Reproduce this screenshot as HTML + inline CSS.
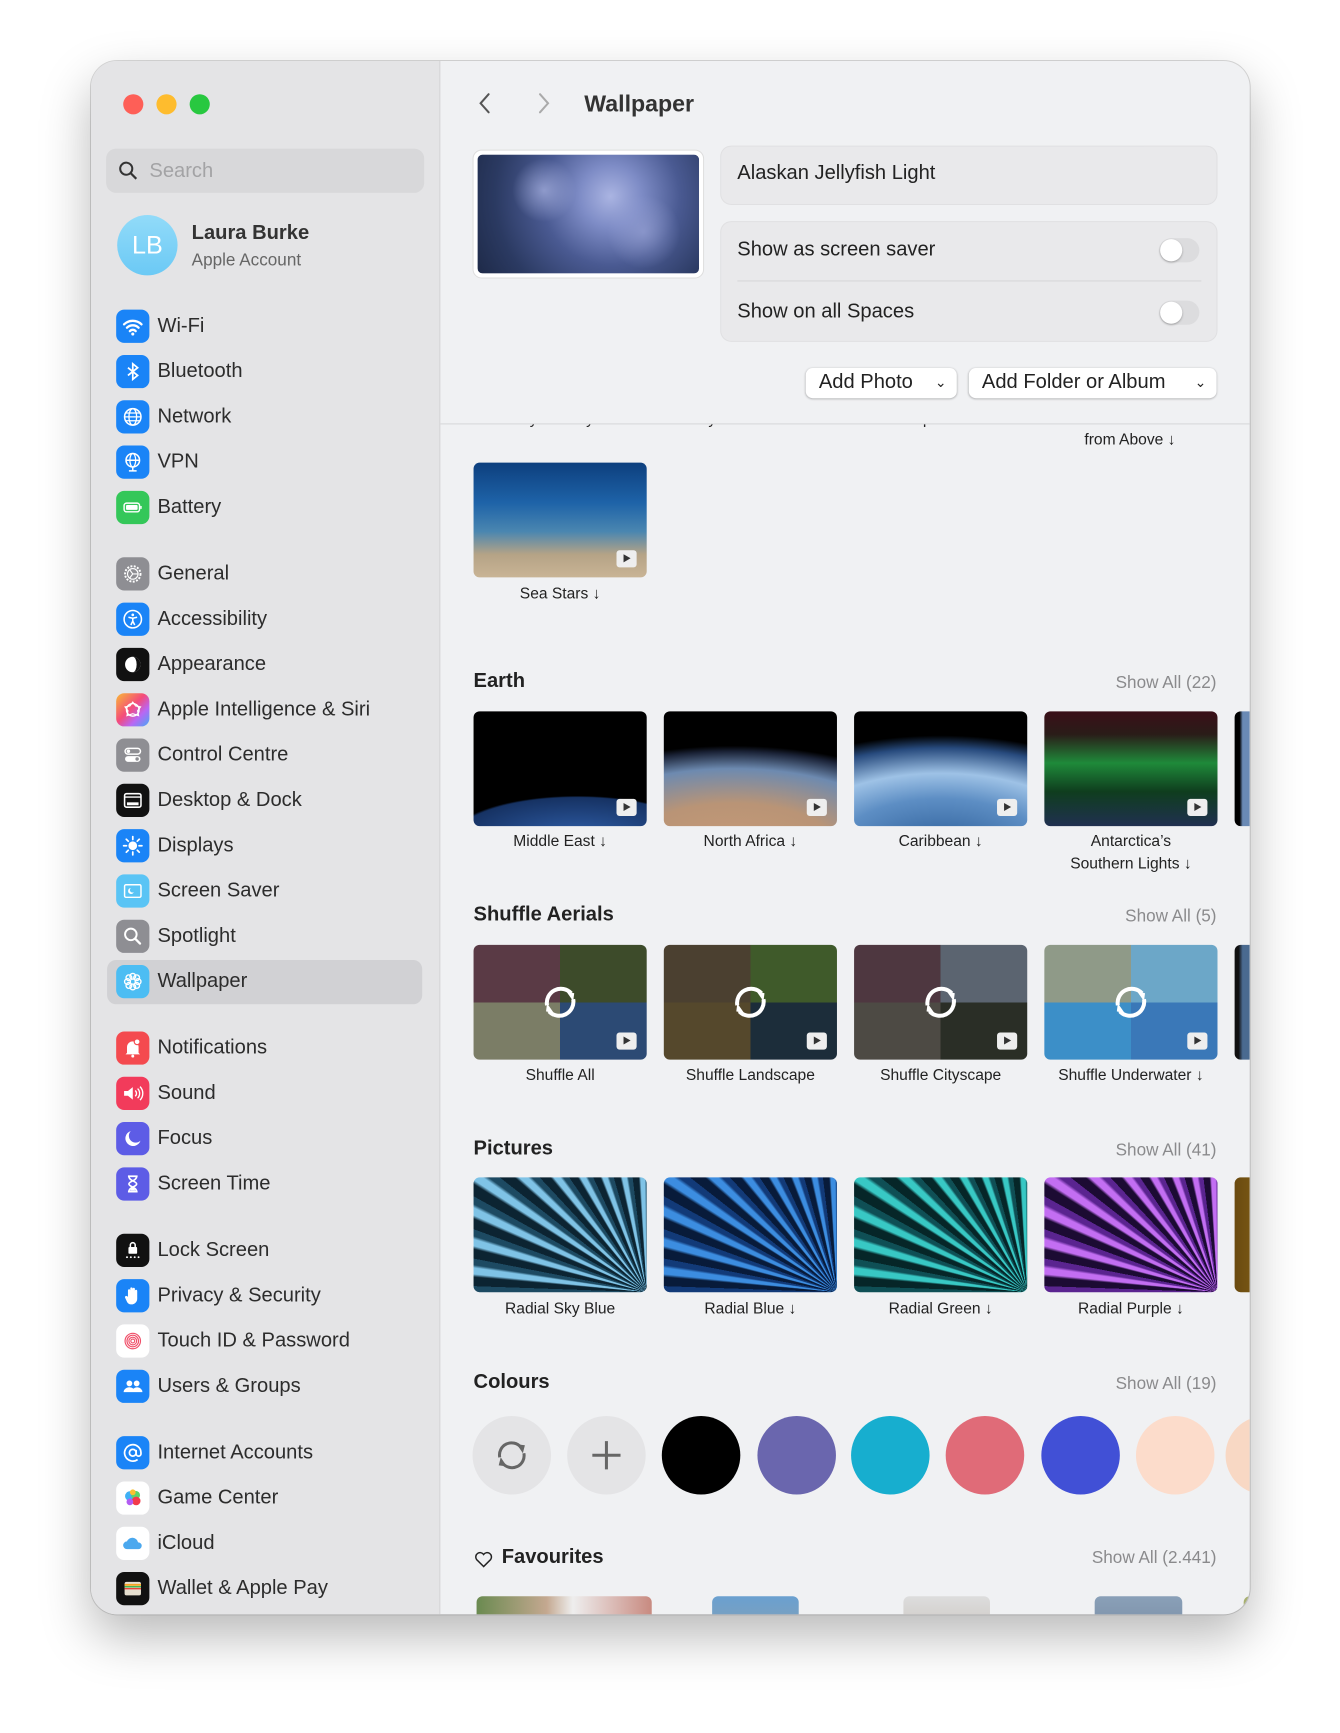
<!DOCTYPE html>
<html><head><meta charset="utf-8"><style>
*{box-sizing:border-box;margin:0;padding:0}
body{width:1340px;height:1733px;background:#fff;font-family:"Liberation Sans",sans-serif;position:relative;overflow:hidden}
.win{position:absolute;left:91px;top:61px;width:1151px;height:1543px;border-radius:26px;overflow:hidden;box-shadow:0 0 0 1px rgba(0,0,0,.15),0 22px 50px rgba(0,0,0,.28);background:#f0f1f3;transform:scale(1.0067);transform-origin:0 0}
.side{position:absolute;left:0;top:0;width:347px;height:100%;background:#e4e4e6;border-right:1px solid #d4d4d6}
.tl{position:absolute;top:33px;width:20px;height:20px;border-radius:50%}
.search{position:absolute;left:15px;top:87px;width:316px;height:44px;background:#d8d8da;border-radius:10px}
.search span{position:absolute;left:43px;top:11px;font-size:20px;color:#a3a3a5}
.av{position:absolute;left:26px;top:153px;width:60px;height:60px;border-radius:50%;background:linear-gradient(#92dbf9,#6bc9f5);color:#fff;font-size:25px;text-align:center;line-height:60px}
.it{position:absolute;left:0;width:347px;height:40px}
.ic{position:absolute;left:25px;top:3px;width:33px;height:33px;border-radius:8px;display:flex;align-items:center;justify-content:center}
.ic svg{width:23px;height:23px}
.it span{position:absolute;left:66px;top:8px;font-size:20px;color:#2c2c2c}
.hl{position:absolute;left:16px;top:893px;width:313px;height:44px;background:#d1d1d4;border-radius:9px}
.main{position:absolute;left:347px;top:0;right:0;height:100%}
.abs{position:absolute}
.h{position:absolute;font-size:20px;font-weight:bold;color:#222}
.sa{position:absolute;font-size:17px;color:#8a8a8c;right:33px}
.th{position:absolute;width:172px;height:114px;border-radius:6px;overflow:hidden}
.cap{position:absolute;width:200px;text-align:center;font-size:15.5px;color:#222;line-height:22px}
.play{position:absolute;right:10px;bottom:10px;width:20px;height:17px;background:#eee;border-radius:3px}
.play:after{content:"";position:absolute;left:7px;top:4px;border-left:7px solid #333;border-top:4.5px solid transparent;border-bottom:4.5px solid transparent}
.shuf{position:absolute;left:61px;top:32px;width:50px;height:50px}
.circ{position:absolute;width:78px;height:78px;border-radius:50%;top:1346px}
.tog{position:absolute;width:40px;height:24px;border-radius:12px;background:#dcdcde}
.tog:after{content:"";position:absolute;left:1px;top:1px;width:22px;height:22px;border-radius:50%;background:#fff;box-shadow:0 1px 2px rgba(0,0,0,.3)}
.btn{position:absolute;top:305px;height:30px;background:#fff;border-radius:7px;box-shadow:0 0.5px 2px rgba(0,0,0,.3);font-size:20px;color:#222;padding:3px 0 0 13px}
</style></head><body>
<div class="win">
<div class="side">
 <div class="tl" style="left:32px;background:#fe5f57"></div>
 <div class="tl" style="left:65px;background:#febc2e"></div>
 <div class="tl" style="left:98px;background:#28c840"></div>
 <div class="search"><svg class="abs" style="left:12px;top:12px" width="20" height="20" viewBox="0 0 20 20"><circle cx="8" cy="8" r="6" fill="none" stroke="#333" stroke-width="2"/><path d="M12.5 12.5L18 18" stroke="#333" stroke-width="2.2"/></svg><span>Search</span></div>
 <div class="av">LB</div>
 <div class="abs" style="left:100px;top:160px;font-size:20px;font-weight:bold;color:#333">Laura Burke</div>
 <div class="abs" style="left:100px;top:188px;font-size:17px;color:#666">Apple Account</div>
 <div class="hl"></div>

 <div class="it" style="top:244px"><div class="ic" style="background:#1a84f7"><svg viewBox="0 0 24 24"><path d="M3 10a13 13 0 0 1 18 0M6 13.5a8.5 8.5 0 0 1 12 0M9 17a4 4 0 0 1 6 0" stroke="#fff" stroke-width="2.4" fill="none" stroke-linecap="round"/><circle cx="12" cy="20" r="1.6" fill="#fff"/></svg></div><span>Wi-Fi</span></div>
 <div class="it" style="top:289px"><div class="ic" style="background:#1a84f7"><svg viewBox="0 0 24 24"><path d="M7 8l10 8-5 4V4l5 4-10 8" stroke="#fff" stroke-width="1.8" fill="none"/></svg></div><span>Bluetooth</span></div>
 <div class="it" style="top:334px"><div class="ic" style="background:#1a84f7"><svg viewBox="0 0 24 24"><circle cx="12" cy="12" r="8.5" stroke="#fff" stroke-width="1.6" fill="none"/><ellipse cx="12" cy="12" rx="4" ry="8.5" stroke="#fff" stroke-width="1.4" fill="none"/><path d="M3.5 12h17M5 8h14M5 16h14" stroke="#fff" stroke-width="1.3"/></svg></div><span>Network</span></div>
 <div class="it" style="top:379px"><div class="ic" style="background:#1a84f7"><svg viewBox="0 0 24 24"><circle cx="12" cy="10" r="7" stroke="#fff" stroke-width="1.6" fill="none"/><ellipse cx="12" cy="10" rx="3" ry="7" stroke="#fff" stroke-width="1.3" fill="none"/><path d="M5 10h14M12 17v4M8 21h8" stroke="#fff" stroke-width="1.5"/></svg></div><span>VPN</span></div>
 <div class="it" style="top:424px"><div class="ic" style="background:#34c759"><svg viewBox="0 0 24 24"><rect x="3" y="7.5" width="16" height="9" rx="2.5" stroke="#fff" stroke-width="1.5" fill="none"/><rect x="5" y="9.5" width="12" height="5" rx="1" fill="#fff"/><path d="M20.5 10.5v3" stroke="#fff" stroke-width="1.5"/></svg></div><span>Battery</span></div>

 <div class="it" style="top:490px"><div class="ic" style="background:#8e8e93"><svg viewBox="0 0 24 24"><circle cx="12" cy="12" r="8" stroke="#fff" stroke-width="2" stroke-dasharray="2 1.5" fill="none"/><circle cx="12" cy="12" r="5.5" stroke="#fff" stroke-width="1.2" fill="none"/><path d="M12 12l-3 -4M12 12l5 0M12 12l-3 4" stroke="#fff" stroke-width="1.2"/></svg></div><span>General</span></div>
 <div class="it" style="top:535px"><div class="ic" style="background:#1a84f7"><svg viewBox="0 0 24 24"><circle cx="12" cy="12" r="9" stroke="#fff" stroke-width="1.6" fill="none"/><circle cx="12" cy="7.5" r="1.4" fill="#fff"/><path d="M7.5 10l4.5 1 4.5-1M12 11v3l-2 4M12 14l2 4" stroke="#fff" stroke-width="1.6" fill="none"/></svg></div><span>Accessibility</span></div>
 <div class="it" style="top:580px"><div class="ic" style="background:#111"><svg viewBox="0 0 24 24"><circle cx="12" cy="12" r="8" fill="#fff"/><path d="M12 4a8 8 0 0 1 0 16a4 8 0 0 0 0-16" fill="#111"/></svg></div><span>Appearance</span></div>
 <div class="it" style="top:625px"><div class="ic" style="background:linear-gradient(135deg,#f9b935,#f44b7a 45%,#b867f4 70%,#45a9f5)"><svg viewBox="0 0 24 24"><circle cx="12" cy="12" r="6.5" stroke="#fff" stroke-width="1.5" fill="none"/><path d="M12 4l3 4 5 1-3 4 1 5-6-2-6 2 1-5-3-4 5-1z" stroke="#fff" stroke-width="1.2" fill="none"/></svg></div><span>Apple Intelligence &amp; Siri</span></div>
 <div class="it" style="top:670px"><div class="ic" style="background:#8e8e93"><svg viewBox="0 0 24 24"><rect x="4" y="5" width="16" height="6" rx="3" stroke="#fff" stroke-width="1.5" fill="none"/><circle cx="7.5" cy="8" r="1.8" fill="#fff"/><rect x="4" y="13" width="16" height="6" rx="3" fill="#fff"/><circle cx="16.5" cy="16" r="1.8" fill="#8e8e93"/></svg></div><span>Control Centre</span></div>
 <div class="it" style="top:715px"><div class="ic" style="background:#111"><svg viewBox="0 0 24 24"><rect x="3.5" y="5" width="17" height="14" rx="2" stroke="#fff" stroke-width="1.6" fill="none"/><path d="M3.5 8.5h17" stroke="#fff" stroke-width="1.4"/><rect x="6" y="14" width="12" height="3" fill="#fff"/></svg></div><span>Desktop &amp; Dock</span></div>
 <div class="it" style="top:760px"><div class="ic" style="background:#1a84f7"><svg viewBox="0 0 24 24"><circle cx="12" cy="12" r="4.5" fill="#fff"/><path d="M12 2.5v3M12 18.5v3M2.5 12h3M18.5 12h3M5.3 5.3l2 2M16.7 16.7l2 2M5.3 18.7l2-2M16.7 7.3l2-2" stroke="#fff" stroke-width="1.8" stroke-linecap="round"/></svg></div><span>Displays</span></div>
 <div class="it" style="top:805px"><div class="ic" style="background:#5ac4f5"><svg viewBox="0 0 24 24"><rect x="3.5" y="5.5" width="17" height="13" rx="1.5" stroke="#fff" stroke-width="1.5" fill="none"/><path d="M10 9a3 3 0 1 0 3 4a2.5 2.5 0 0 1-3-4" fill="#fff"/></svg></div><span>Screen Saver</span></div>
 <div class="it" style="top:850px"><div class="ic" style="background:#8e8e93"><svg viewBox="0 0 24 24"><circle cx="10" cy="10" r="6" stroke="#fff" stroke-width="2" fill="none"/><path d="M14.5 14.5l5 5" stroke="#fff" stroke-width="2.4" stroke-linecap="round"/></svg></div><span>Spotlight</span></div>
 <div class="it" style="top:895px"><div class="ic" style="background:#4cbdf3"><svg viewBox="0 0 24 24"><g stroke="#fff" stroke-width="1.4" fill="none"><circle cx="12" cy="6.5" r="3"/><circle cx="12" cy="17.5" r="3"/><circle cx="6.5" cy="12" r="3"/><circle cx="17.5" cy="12" r="3"/><circle cx="8" cy="8" r="3"/><circle cx="16" cy="16" r="3"/><circle cx="16" cy="8" r="3"/><circle cx="8" cy="16" r="3"/></g></svg></div><span>Wallpaper</span></div>

 <div class="it" style="top:961px"><div class="ic" style="background:#f44a4f"><svg viewBox="0 0 24 24"><path d="M6 17v-6a6 6 0 0 1 12 0v6l1.5 1.5h-15z" fill="#fff"/><circle cx="12" cy="20.3" r="1.5" fill="#fff"/><circle cx="16.5" cy="5.5" r="3" fill="#fff" stroke="#f44a4f" stroke-width="1.2"/></svg></div><span>Notifications</span></div>
 <div class="it" style="top:1006px"><div class="ic" style="background:#f23b5b"><svg viewBox="0 0 24 24"><path d="M3 9.5h4l5-4v13l-5-4H3z" fill="#fff"/><path d="M14.5 9a4 4 0 0 1 0 6M17 7a7 7 0 0 1 0 10M19.5 5a10 10 0 0 1 0 14" stroke="#fff" stroke-width="1.4" fill="none"/></svg></div><span>Sound</span></div>
 <div class="it" style="top:1051px"><div class="ic" style="background:#5d5ce6"><svg viewBox="0 0 24 24"><path d="M10 4a8 8 0 1 0 10 10a7 7 0 0 1-10-10" fill="#fff"/></svg></div><span>Focus</span></div>
 <div class="it" style="top:1096px"><div class="ic" style="background:#5d5ce6"><svg viewBox="0 0 24 24"><path d="M7 4h10M7 20h10M8 4c0 5 8 5 8 8s-8 3-8 8M16 4c0 5-8 5-8 8s8 3 8 8" stroke="#fff" stroke-width="1.7" fill="none"/><path d="M9 19l3-4 3 4z" fill="#fff"/></svg></div><span>Screen Time</span></div>

 <div class="it" style="top:1162px"><div class="ic" style="background:#111"><svg viewBox="0 0 24 24"><rect x="7.5" y="8.5" width="9" height="7" rx="1" fill="#fff"/><path d="M9.5 8.5v-2a2.5 2.5 0 0 1 5 0v2" stroke="#fff" stroke-width="1.6" fill="none"/><g fill="#fff"><circle cx="6" cy="19" r="1"/><circle cx="10" cy="19" r="1"/><circle cx="14" cy="19" r="1"/><circle cx="18" cy="19" r="1"/></g></svg></div><span>Lock Screen</span></div>
 <div class="it" style="top:1207px"><div class="ic" style="background:#1a84f7"><svg viewBox="0 0 24 24"><path d="M7 13V6.5a1.2 1.2 0 0 1 2.4 0V11V4.5a1.2 1.2 0 0 1 2.4 0V11V5a1.2 1.2 0 0 1 2.4 0v6V7a1.2 1.2 0 0 1 2.4 0v8a6 6 0 0 1-6 6h-.5a5 5 0 0 1-4-2.5L4 14a1.3 1.3 0 0 1 2.2-1.3z" fill="#fff"/></svg></div><span>Privacy &amp; Security</span></div>
 <div class="it" style="top:1252px"><div class="ic" style="background:#fff"><svg viewBox="0 0 24 24"><g stroke="#f0506a" stroke-width="1.2" fill="none"><circle cx="12" cy="12" r="8"/><circle cx="12" cy="12" r="6"/><circle cx="12" cy="12" r="4"/><circle cx="12" cy="12" r="2"/></g></svg></div><span>Touch ID &amp; Password</span></div>
 <div class="it" style="top:1297px"><div class="ic" style="background:#1a84f7"><svg viewBox="0 0 24 24"><circle cx="8.5" cy="9" r="3" fill="#fff"/><circle cx="16" cy="9" r="3" fill="#fff"/><path d="M2.5 18a6 5 0 0 1 12 0zM11 18a5.5 5 0 0 1 11 0z" fill="#fff"/></svg></div><span>Users &amp; Groups</span></div>

 <div class="it" style="top:1363px"><div class="ic" style="background:#1a84f7"><svg viewBox="0 0 24 24"><circle cx="12" cy="12" r="3.5" stroke="#fff" stroke-width="1.8" fill="none"/><path d="M15.5 9v4a2.5 2.5 0 0 0 5 0v-1a8.5 8.5 0 1 0-3.5 7" stroke="#fff" stroke-width="1.8" fill="none"/></svg></div><span>Internet Accounts</span></div>
 <div class="it" style="top:1408px"><div class="ic" style="background:#fff"><svg viewBox="0 0 24 24"><circle cx="9" cy="10" r="5" fill="#3fb0f5"/><circle cx="15" cy="9" r="4.5" fill="#5bd46a"/><circle cx="15.5" cy="15" r="4.5" fill="#f23b4b"/><circle cx="9" cy="16" r="3.5" fill="#b25cf2"/><circle cx="12" cy="6" r="3" fill="#f9c132"/></svg></div><span>Game Center</span></div>
 <div class="it" style="top:1453px"><div class="ic" style="background:#fff"><svg viewBox="0 0 24 24"><path d="M6 18a4 4 0 0 1 0-8a6 6 0 0 1 11.5 1a3.5 3.5 0 0 1 .5 7z" fill="#4ba8ee"/></svg></div><span>iCloud</span></div>
 <div class="it" style="top:1498px"><div class="ic" style="background:#111"><svg viewBox="0 0 24 24"><rect x="3.5" y="5" width="17" height="14" rx="2" fill="#e6dfcf"/><path d="M3.5 8h17" stroke="#f5a623" stroke-width="2"/><path d="M3.5 10h17" stroke="#49b54f" stroke-width="1.5"/><path d="M3.5 12h17" stroke="#e8453c" stroke-width="1.5"/></svg></div><span>Wallet &amp; Apple Pay</span></div>
</div>

<div class="main">
 <svg class="abs" style="left:37px;top:30px" width="16" height="24" viewBox="0 0 16 24"><path d="M11 3L3 12l8 9" stroke="#555" stroke-width="2" fill="none" stroke-linecap="round"/></svg>
 <svg class="abs" style="left:94px;top:30px" width="16" height="24" viewBox="0 0 16 24"><path d="M5 3l8 9-8 9" stroke="#aaa" stroke-width="2" fill="none" stroke-linecap="round"/></svg>
 <div class="abs" style="left:143px;top:29px;font-size:23px;font-weight:bold;color:#333">Wallpaper</div>

 <div class="abs" style="left:33px;top:89px;width:228px;height:126px;border-radius:8px;background:#fff;padding:4px;box-shadow:0 0 0 1px #ddd">
  <div style="width:100%;height:100%;border-radius:5px;background:radial-gradient(circle at 30% 30%,rgba(170,180,226,.7) 0,transparent 18%),radial-gradient(circle at 75% 65%,rgba(160,170,220,.6) 0,transparent 20%),radial-gradient(circle at 60% 35%,#aab4e2 0,#7e8cc6 20%,#4a5a92 45%,#2b3a62 75%,#1e2a48 100%)"></div>
 </div>
 <div class="abs" style="left:279px;top:85px;width:492px;height:57px;background:#e9e9eb;border-radius:10px;box-shadow:0 0 0 1px #e0e0e2"></div>
 <div class="abs" style="left:295px;top:100px;font-size:20px;color:#222">Alaskan Jellyfish Light</div>
 <div class="abs" style="left:279px;top:160px;width:492px;height:118px;background:#e9e9eb;border-radius:10px;box-shadow:0 0 0 1px #e0e0e2"></div>
 <div class="abs" style="left:295px;top:218px;width:461px;height:1px;background:#d6d6d8"></div>
 <div class="abs" style="left:295px;top:176px;font-size:20px;color:#222">Show as screen saver</div>
 <div class="abs" style="left:295px;top:238px;font-size:20px;color:#222">Show on all Spaces</div>
 <div class="tog" style="left:714px;top:176px"></div>
 <div class="tog" style="left:714px;top:238px"></div>
 <div class="btn" style="left:363px;width:150px">Add Photo <span style="font-size:14px;position:absolute;right:10px;top:6px">&#8964;</span></div>
 <div class="btn" style="left:525px;width:246px">Add Folder or Album <span style="font-size:14px;position:absolute;right:10px;top:6px">&#8964;</span></div>
 <div class="abs" style="left:0;top:360px;width:100%;height:1px;background:#d6d6d8"></div>

 <div class="abs" style="left:0;top:361px;width:804px;height:1182px;overflow:hidden">
  <div style="position:absolute;left:0;top:-361px;width:804px">
   <div class="cap" style="left:585px;top:345px">Red Sea Coral</div>
   <div class="cap" style="left:585px;top:366px">from Above ↓</div>
   <div class="cap" style="left:19px;top:345px">Jellyfish Rays ↓</div>
   <div class="cap" style="left:208px;top:345px">Grey Reef Sharks ↓</div>
   <div class="cap" style="left:397px;top:345px">Kelp Dark ↓</div>
   <div class="th" style="left:33px;top:399px;background:linear-gradient(#0d3f7e,#1e63a8 35%,#4a86b0 60%,#b5a386 80%,#c9b495)"><div class="play"></div></div>
   <div class="cap" style="left:19px;top:519px">Sea Stars ↓</div>

   <div class="h" style="left:33px;top:605px">Earth</div><div class="sa" style="top:608px">Show All (22)</div>
   <div class="th" style="left:33px;top:646px;background:radial-gradient(ellipse 140% 70% at 60% 110%,#2f5ea8 0,#163263 50%,#000 52%)"><div class="play"></div></div>
   <div class="th" style="left:222px;top:646px;background:radial-gradient(ellipse 150% 100% at 40% 120%,#c69a78 0,#b99476 40%,#6d8ab0 70%,#1a2236 85%,#000 90%)"><div class="play"></div></div>
   <div class="th" style="left:411px;top:646px;background:radial-gradient(ellipse 150% 110% at 50% 120%,#2b5c96 0,#5d8ec4 40%,#9ec2e6 60%,#274a7d 80%,#000 90%)"><div class="play"></div></div>
   <div class="th" style="left:600px;top:646px;background:linear-gradient(#3a0f18,#2a1c18 20%,#1f8a3a 45%,#0f3d1e 70%,#203050)"><div class="play"></div></div>
   <div class="th" style="left:789px;top:646px;background:linear-gradient(90deg,#000 5px,#6a8ab5 8px)"></div>
   <div class="cap" style="left:19px;top:765px">Middle East ↓</div>
   <div class="cap" style="left:208px;top:765px">North Africa ↓</div>
   <div class="cap" style="left:397px;top:765px">Caribbean ↓</div>
   <div class="cap" style="left:586px;top:765px">Antarctica’s<br>Southern Lights ↓</div>

   <div class="h" style="left:33px;top:837px">Shuffle Aerials</div><div class="sa" style="top:840px">Show All (5)</div>
   <div class="th" style="left:33px;top:878px;background:conic-gradient(from 90deg at 50% 50%,#2c4a74 0 25%,#7b7d66 25% 50%,#5a3a45 50% 75%,#3d4b2a 75%)"><svg class="shuf" viewBox="0 0 50 50"><path d="M12 28a14 14 0 0 1 24-12M38 22a14 14 0 0 1-24 12" stroke="#fff" stroke-width="4" fill="none"/><path d="M31 14l8 2-1 8zM19 36l-8-2 1-8z" fill="#fff"/></svg><div class="play"></div></div>
   <div class="th" style="left:222px;top:878px;background:conic-gradient(from 90deg at 50% 50%,#1c2d3a 0 25%,#55482c 25% 50%,#4b4030 50% 75%,#3f5a2a 75%)"><svg class="shuf" viewBox="0 0 50 50"><path d="M12 28a14 14 0 0 1 24-12M38 22a14 14 0 0 1-24 12" stroke="#fff" stroke-width="4" fill="none"/><path d="M31 14l8 2-1 8zM19 36l-8-2 1-8z" fill="#fff"/></svg><div class="play"></div></div>
   <div class="th" style="left:411px;top:878px;background:conic-gradient(from 90deg at 50% 50%,#2a2e26 0 25%,#4d4a44 25% 50%,#4e3740 50% 75%,#5b6470 75%)"><svg class="shuf" viewBox="0 0 50 50"><path d="M12 28a14 14 0 0 1 24-12M38 22a14 14 0 0 1-24 12" stroke="#fff" stroke-width="4" fill="none"/><path d="M31 14l8 2-1 8zM19 36l-8-2 1-8z" fill="#fff"/></svg><div class="play"></div></div>
   <div class="th" style="left:600px;top:878px;background:conic-gradient(from 90deg at 50% 50%,#3a78b8 0 25%,#3c8fc8 25% 50%,#8f9a88 50% 75%,#6ca7c8 75%)"><svg class="shuf" viewBox="0 0 50 50"><path d="M12 28a14 14 0 0 1 24-12M38 22a14 14 0 0 1-24 12" stroke="#fff" stroke-width="4" fill="none"/><path d="M31 14l8 2-1 8zM19 36l-8-2 1-8z" fill="#fff"/></svg><div class="play"></div></div>
   <div class="th" style="left:789px;top:878px;background:linear-gradient(90deg,#111 4px,#4a6a90 8px)"></div>
   <div class="cap" style="left:19px;top:997px">Shuffle All</div>
   <div class="cap" style="left:208px;top:997px">Shuffle Landscape</div>
   <div class="cap" style="left:397px;top:997px">Shuffle Cityscape</div>
   <div class="cap" style="left:586px;top:997px">Shuffle Underwater ↓</div>

   <div class="h" style="left:33px;top:1069px">Pictures</div><div class="sa" style="top:1072px">Show All (41)</div>
   <div class="th" style="left:33px;top:1109px;background:repeating-conic-gradient(from 200deg at 100% 100%,#0c2432 0 3deg,#7fc3e6 4deg 6deg,#1d4a62 7deg 9deg)"></div>
   <div class="th" style="left:222px;top:1109px;background:repeating-conic-gradient(from 200deg at 100% 100%,#081b3a 0 3deg,#3c8de0 4deg 6deg,#123a78 7deg 9deg)"></div>
   <div class="th" style="left:411px;top:1109px;background:repeating-conic-gradient(from 200deg at 100% 100%,#062628 0 3deg,#38c8c4 4deg 6deg,#0f4f55 7deg 9deg)"></div>
   <div class="th" style="left:600px;top:1109px;background:repeating-conic-gradient(from 200deg at 100% 100%,#1c0b33 0 3deg,#c36ef2 4deg 6deg,#5a2490 7deg 9deg)"></div>
   <div class="th" style="left:789px;top:1109px;background:linear-gradient(90deg,#6a4a10,#f0c030)"></div>
   <div class="cap" style="left:19px;top:1229px">Radial Sky Blue</div>
   <div class="cap" style="left:208px;top:1229px">Radial Blue ↓</div>
   <div class="cap" style="left:397px;top:1229px">Radial Green ↓</div>
   <div class="cap" style="left:586px;top:1229px">Radial Purple ↓</div>

   <div class="h" style="left:33px;top:1301px">Colours</div><div class="sa" style="top:1304px">Show All (19)</div>
   <div class="circ" style="left:32px;background:#e4e4e6"><svg style="position:absolute;left:19px;top:19px" width="40" height="40" viewBox="0 0 40 40"><path d="M8 22a12 12 0 0 1 21-10M32 18a12 12 0 0 1-21 10" stroke="#666" stroke-width="3" fill="none"/><path d="M25 9l8 1-2 8zM15 31l-8-1 2-8z" fill="#666"/></svg></div>
   <div class="circ" style="left:126px;background:#e4e4e6"><svg style="position:absolute;left:22px;top:22px" width="34" height="34" viewBox="0 0 34 34"><path d="M17 3v28M3 17h28" stroke="#666" stroke-width="3"/></svg></div>
   <div class="circ" style="left:220px;background:#000"></div>
   <div class="circ" style="left:315px;background:#6a66ae"></div>
   <div class="circ" style="left:408px;background:#17aecf"></div>
   <div class="circ" style="left:502px;background:#e06b78"></div>
   <div class="circ" style="left:597px;background:#4150d6"></div>
   <div class="circ" style="left:691px;background:#fcdccb"></div>
   <div class="circ" style="left:780px;background:#f8d8c4"></div>

   <svg class="abs" style="left:33px;top:1478px" width="20" height="20" viewBox="0 0 20 20"><path d="M10 17.5L3 10.5a4 4 0 0 1 7-5a4 4 0 0 1 7 5z" stroke="#222" stroke-width="1.5" fill="none"/></svg>
   <div class="h" style="left:61px;top:1475px">Favourites</div><div class="sa" style="top:1477px">Show All (2.441)</div>
   <div class="th" style="left:36px;top:1525px;width:174px;background:linear-gradient(90deg,#6a8a50,#c4a890 40%,#eee 55%,#c88a80)"></div>
   <div class="th" style="left:270px;top:1525px;width:86px;background:linear-gradient(#6aa0d0,#b8a080)"></div>
   <div class="th" style="left:460px;top:1525px;width:86px;background:linear-gradient(#ddd,#a89888)"></div>
   <div class="th" style="left:650px;top:1525px;width:87px;background:linear-gradient(#8aa0b8,#5a6a80)"></div>
   <div class="th" style="left:798px;top:1525px;background:#a8b070"></div>
  </div>
 </div>
</div>
</div>
</body></html>
